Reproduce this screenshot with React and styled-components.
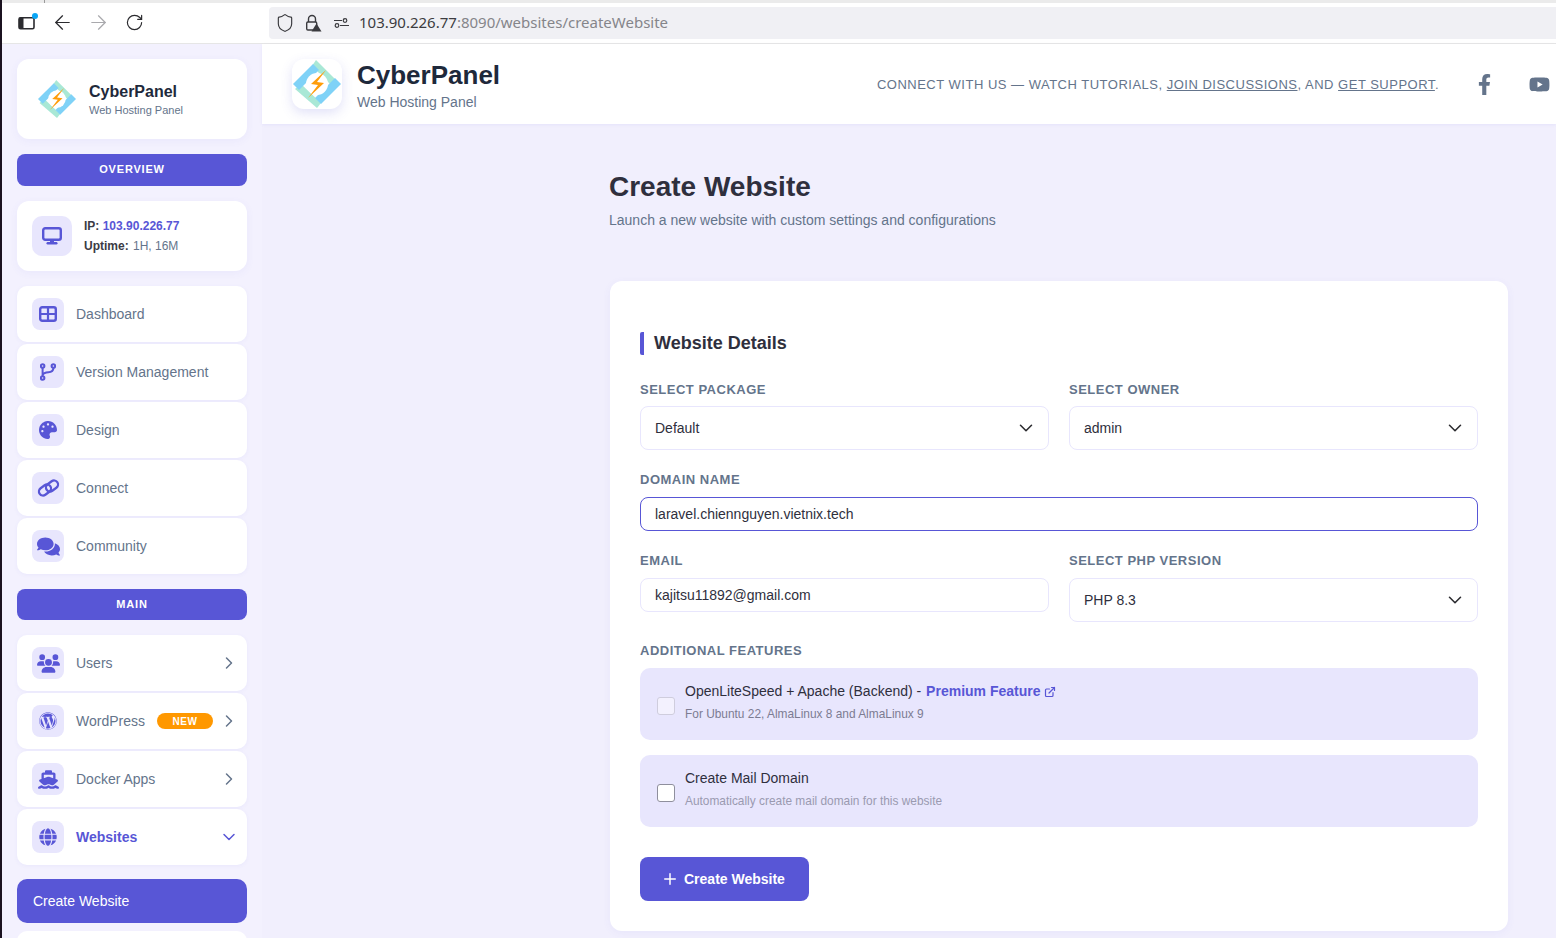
import React from "react";
import styled, { createGlobalStyle } from "styled-components";
import { ArrowLeft, ArrowRight, RotateCw, Shield, ChevronRight, ChevronDown, Plus, ExternalLink } from "lucide-react";
import { FaPalette, FaComments, FaWordpress, FaGlobe, FaFacebookF, FaYoutube } from "react-icons/fa";
import { FaShip, FaUsers } from "react-icons/fa6";

const GlobalStyle = createGlobalStyle`
  html, body {
    margin: 0;
    padding: 0;
    height: 100%;
    overflow: hidden;
    background: #f1effd;
    font-family: "Liberation Sans", Arial, sans-serif;
  }
  * { box-sizing: border-box; }
`;

const Logo = ({ size }) => (
  <svg width={size} height={size} viewBox="0 0 48 48">
    <polygon points="23,0 42,19 37,24 19,6" fill="#a9e8d6" />
    <polygon points="2,29 8,24 28,43 24,48" fill="#a9e8d6" />
    <polygon points="0,24 20,4 26,10 6,30" fill="#7fd2f7" />
    <polygon points="48,24 28,44 22,38 42,18" fill="#7fd2f7" />
    <circle cx="24" cy="24" r="11" fill="#fff" />
    <polygon points="33,10 18,24 25,25 15,38 31,23 24,22" fill="#ff9d0a" />
  </svg>
);

const DesktopIcon = () => (
  <svg width="20" height="18" viewBox="0 0 20 18">
    <rect x="1.2" y="1.2" width="17.6" height="11.6" rx="2" fill="none" stroke="currentColor" strokeWidth="2.4" />
    <path d="M8 13h4v2H8z" fill="currentColor" />
    <rect x="4.5" y="15" width="11" height="2.4" rx="1.2" fill="currentColor" />
  </svg>
);

const DashIcon = () => (
  <svg width="18" height="16" viewBox="0 0 18 16">
    <rect x="1.2" y="1.2" width="15.6" height="13.6" rx="2" fill="none" stroke="currentColor" strokeWidth="2.4" />
    <path d="M1 8h16M9 1v14" stroke="currentColor" strokeWidth="2.2" />
  </svg>
);

const BranchIcon = () => (
  <svg width="16" height="18" viewBox="0 0 16 18" fill="none" stroke="currentColor" strokeWidth="2">
    <circle cx="2.6" cy="3" r="1.8" />
    <circle cx="2.6" cy="15" r="1.8" />
    <circle cx="13.4" cy="3" r="1.8" />
    <path d="M2.6 5v8M13.4 5c0 3-2 4-5 4.2-3 .2-5 1-5.8 2.8" />
  </svg>
);

const LinkIcon = () => (
  <svg width="23" height="18" viewBox="0 0 23 18" fill="none" stroke="currentColor" strokeWidth="2.3">
    <rect x="1.5" y="7" width="13" height="8" rx="4" transform="rotate(-36 8 11)" />
    <rect x="8.5" y="3" width="13" height="8" rx="4" transform="rotate(-36 15 7)" />
  </svg>
);

const App = () => {
  return (
    <Page>
      <GlobalStyle />
      <TabStrip>
        <TabTick />
      </TabStrip>
      <Toolbar>
        <NavButtons>
          <NavCell>
            <PanelToggle>
              <svg width="18" height="14" viewBox="0 0 18 14">
                <rect x="1" y="1.7" width="15" height="11" rx="1.5" fill="none" stroke="#2b2b2f" strokeWidth="1.6" />
                <rect x="1" y="1.7" width="4.5" height="11" fill="#2b2b2f" />
              </svg>
              <PanelDot />
            </PanelToggle>
          </NavCell>
          <NavCell><ArrowLeft size={23} color="#2b2b2f" strokeWidth={1.3} /></NavCell>
          <NavCell><ArrowRight size={23} color="#a9a9ad" strokeWidth={1.3} /></NavCell>
          <NavCell><RotateCw size={19} color="#2b2b2f" strokeWidth={1.5} /></NavCell>
        </NavButtons>
        <AddressBar>
          <AddressCell><Shield size={20} color="#3a3a3e" strokeWidth={1.4} /></AddressCell>
          <AddressCell>
            <svg width="17" height="18" viewBox="0 0 17 18">
              <path d="M3.5 8V5a3.5 3.5 0 0 1 7 0v3" fill="none" stroke="#3a3a3e" strokeWidth="1.4" />
              <rect x="1.7" y="8" width="10" height="8" rx="1.2" fill="none" stroke="#3a3a3e" strokeWidth="1.4" />
              <path d="M11.5 9.5l5 8h-10z" fill="#3a3a3e" />
            </svg>
          </AddressCell>
          <AddressCell>
            <svg width="15" height="10" viewBox="0 0 15 10" fill="none" stroke="#3a3a3e" strokeWidth="1.2">
              <circle cx="11" cy="2.5" r="1.8" />
              <circle cx="3" cy="7.5" r="1.8" />
              <path d="M0 2.5h8M6 7.5h9" />
            </svg>
          </AddressCell>
          <UrlText>
            103.90.226.77<UrlMuted>:8090/websites/createWebsite</UrlMuted>
          </UrlText>
        </AddressBar>
      </Toolbar>

      <Body>
        <Sidebar>
          <BrandCard>
            <Logo size={38} />
            <BrandText>
              <BrandName>CyberPanel</BrandName>
              <BrandSub>Web Hosting Panel</BrandSub>
            </BrandText>
          </BrandCard>

          <SectionPill>OVERVIEW</SectionPill>

          <InfoCard>
            <InfoIcon>
              <DesktopIcon />
            </InfoIcon>
            <div>
              <InfoLine>
                <b>IP:</b> <IpValue>103.90.226.77</IpValue>
              </InfoLine>
              <InfoLine>
                <b>Uptime:</b> <UptimeValue>1H, 16M</UptimeValue>
              </InfoLine>
            </div>
          </InfoCard>

          <NavGroup>
            <NavItem>
              <NavIcon><DashIcon /></NavIcon>
              <NavLabel>Dashboard</NavLabel>
            </NavItem>
            <NavItem>
              <NavIcon><BranchIcon /></NavIcon>
              <NavLabel>Version Management</NavLabel>
            </NavItem>
            <NavItem>
              <NavIcon><FaPalette size={18} /></NavIcon>
              <NavLabel>Design</NavLabel>
            </NavItem>
            <NavItem>
              <NavIcon><LinkIcon /></NavIcon>
              <NavLabel>Connect</NavLabel>
            </NavItem>
            <NavItem>
              <NavIcon><FaComments size={23} /></NavIcon>
              <NavLabel>Community</NavLabel>
            </NavItem>
          </NavGroup>

          <SectionPill $short>MAIN</SectionPill>

          <NavGroup>
            <NavItem>
              <NavIcon><FaUsers size={23} /></NavIcon>
              <NavLabel>Users</NavLabel>
              <Chevron><ChevronRight size={20} strokeWidth={1.8} /></Chevron>
            </NavItem>
            <NavItem>
              <NavIcon><FaWordpress size={18} /></NavIcon>
              <NavLabel>WordPress</NavLabel>
              <NewBadge>NEW</NewBadge>
              <Chevron><ChevronRight size={20} strokeWidth={1.8} /></Chevron>
            </NavItem>
            <NavItem>
              <NavIcon><FaShip size={21} /></NavIcon>
              <NavLabel>Docker Apps</NavLabel>
              <Chevron><ChevronRight size={20} strokeWidth={1.8} /></Chevron>
            </NavItem>
            <NavItem>
              <NavIcon><FaGlobe size={18} /></NavIcon>
              <NavLabel $active>Websites</NavLabel>
              <Chevron $active><ChevronDown size={20} strokeWidth={1.8} /></Chevron>
            </NavItem>
          </NavGroup>

          <SubGroup>
            <SubItem $active>Create Website</SubItem>
            <SubItem />
          </SubGroup>
        </Sidebar>

        <Column>
          <Header>
            <HeaderBrand>
              <LogoTile>
                <Logo size={48} />
              </LogoTile>
              <HeaderText>
                <HeaderName>CyberPanel</HeaderName>
                <HeaderSub>Web Hosting Panel</HeaderSub>
              </HeaderText>
            </HeaderBrand>
            <HeaderRight>
              <ConnectText>
                Connect with us — watch tutorials, <u>join discussions</u>, and <u>get support</u>.
              </ConnectText>
              <SocialIcon><FaFacebookF size={21} /></SocialIcon>
              <SocialIcon><FaYoutube size={21} /></SocialIcon>
            </HeaderRight>
          </Header>

          <Main>
            <PageTitle>Create Website</PageTitle>
            <PageSub>Launch a new website with custom settings and configurations</PageSub>

            <Card>
              <SectionTitle>Website Details</SectionTitle>

              <TwoCols>
                <Field>
                  <Label $tight>Select Package</Label>
                  <SelectBox>
                    Default
                    <ChevronDown size={22} color="#2b2b2f" strokeWidth={1.7} />
                  </SelectBox>
                </Field>
                <Field>
                  <Label $tight>Select Owner</Label>
                  <SelectBox>
                    admin
                    <ChevronDown size={22} color="#2b2b2f" strokeWidth={1.7} />
                  </SelectBox>
                </Field>
              </TwoCols>

              <Field>
                <Label>Domain Name</Label>
                <TextInput $focused readOnly value="laravel.chiennguyen.vietnix.tech" />
              </Field>

              <TwoCols>
                <LastField>
                  <Label>Email</Label>
                  <TextInput readOnly value="kajitsu11892@gmail.com" />
                </LastField>
                <LastField>
                  <Label>Select PHP Version</Label>
                  <SelectBox>
                    PHP 8.3
                    <ChevronDown size={22} color="#2b2b2f" strokeWidth={1.7} />
                  </SelectBox>
                </LastField>
              </TwoCols>

              <Label>Additional Features</Label>
              <FeatureBox>
                <CheckBox type="checkbox" disabled />
                <FeatureText>
                  <FeatureTitle>
                    OpenLiteSpeed + Apache (Backend) - <PremiumLink>Premium Feature</PremiumLink>{" "}
                    <LinkOut size={12} strokeWidth={2.4} />
                  </FeatureTitle>
                  <FeatureHint $dark>For Ubuntu 22, AlmaLinux 8 and AlmaLinux 9</FeatureHint>
                </FeatureText>
              </FeatureBox>
              <FeatureBox>
                <CheckBox type="checkbox" />
                <FeatureText>
                  <FeatureTitle>Create Mail Domain</FeatureTitle>
                  <FeatureHint>Automatically create mail domain for this website</FeatureHint>
                </FeatureText>
              </FeatureBox>

              <PrimaryButton>
                <Plus size={18} strokeWidth={2} />
                Create Website
              </PrimaryButton>
            </Card>
          </Main>
        </Column>
      </Body>
    </Page>
  );
};

export default App;

const Page = styled.div`
  height: 938px;
  overflow: hidden;
  border-left: 2px solid #1b1220;
  display: flex;
  flex-direction: column;
`;
const TabStrip = styled.div`
  height: 3px;
  background: #ebebeb;
  flex: none;
`;
const TabTick = styled.div`
  width: 1px;
  height: 3px;
  margin-left: 42px;
  background: #9a9a9a;
`;
const Toolbar = styled.div`
  height: 41px;
  flex: none;
  background: #fff;
  border-bottom: 1px solid #e6e6e6;
  display: flex;
  align-items: center;
  padding-bottom: 1px;
`;
const NavButtons = styled.div`
  width: 267px;
  flex: none;
  padding-left: 6px;
  display: flex;
  align-items: center;
`;
const NavCell = styled.div`
  width: 36px;
  height: 24px;
  display: flex;
  align-items: center;
  justify-content: center;
`;
const PanelToggle = styled.div`
  position: relative;
  width: 18px;
  height: 14px;
  margin-left: 1px;
  display: flex;
`;
const PanelDot = styled.span`
  position: absolute;
  top: -3px;
  right: -2px;
  width: 6px;
  height: 6px;
  border-radius: 50%;
  background: #0aa5f5;
`;
const AddressBar = styled.div`
  flex: 1;
  height: 32px;
  background: #f0f0f4;
  border-radius: 4px 0 0 4px;
  display: flex;
  align-items: center;
  padding-left: 2px;
`;
const AddressCell = styled.div`
  width: 28px;
  display: flex;
  align-items: center;
  justify-content: center;
`;
const UrlText = styled.div`
  font-family: "Noto Sans", sans-serif;
  font-size: 15px;
  color: #3c3c40;
  margin-left: 4px;
  padding-bottom: 2px;
`;
const UrlMuted = styled.span`
  color: #85858a;
`;
const Body = styled.div`
  flex: 1;
  min-height: 0;
  display: flex;
`;
const Sidebar = styled.aside`
  width: 260px;
  flex: none;
  padding: 15px;
  background: #f3f1fe;
  display: flex;
  flex-direction: column;
  gap: 15px;
`;
const BrandCard = styled.div`
  height: 80px;
  flex: none;
  background: #fff;
  border-radius: 12px;
  box-shadow: 0 2px 8px rgba(88, 86, 214, 0.06);
  display: flex;
  align-items: center;
  gap: 13px;
  padding-left: 21px;
`;
const BrandText = styled.div`
  padding-top: 2px;
`;
const BrandName = styled.div`
  font-size: 16px;
  font-weight: 700;
  color: #1e293b;
  line-height: 20px;
`;
const BrandSub = styled.div`
  font-size: 11px;
  color: #64748b;
  line-height: 15px;
  margin-top: 1px;
`;
const SectionPill = styled.div`
  height: ${(p) => (p.$short ? "31px" : "32px")};
  flex: none;
  background: #5856d6;
  border-radius: 8px;
  color: #fff;
  font-size: 11px;
  font-weight: 700;
  letter-spacing: 0.8px;
  padding-bottom: 2px;
  display: flex;
  align-items: center;
  justify-content: center;
`;
const InfoCard = styled.div`
  height: 70px;
  flex: none;
  background: #fff;
  border-radius: 12px;
  box-shadow: 0 2px 8px rgba(88, 86, 214, 0.06);
  display: flex;
  align-items: center;
  gap: 12px;
  padding-left: 15px;
`;
const InfoIcon = styled.div`
  width: 40px;
  height: 40px;
  border-radius: 10px;
  background: #e8e6fd;
  color: #5856d6;
  display: flex;
  align-items: center;
  justify-content: center;
`;
const InfoLine = styled.div`
  font-size: 12px;
  line-height: 20px;
  color: #64748b;
  b {
    color: #3b3b45;
  }
`;
const IpValue = styled.span`
  color: #5856d6;
  font-weight: 700;
`;
const UptimeValue = styled.span`
  margin-left: 1px;
`;
const NavGroup = styled.nav`
  flex: none;
  display: flex;
  flex-direction: column;
  gap: 2px;
`;
const NavItem = styled.div`
  height: 56px;
  background: #fff;
  border-radius: 10px;
  box-shadow: 0 1px 4px rgba(88, 86, 214, 0.06);
  display: flex;
  align-items: center;
  padding: 0 8px 0 15px;
`;
const NavIcon = styled.div`
  width: 32px;
  height: 32px;
  flex: none;
  border-radius: 8px;
  background: #e8e6fd;
  color: #5856d6;
  display: flex;
  align-items: center;
  justify-content: center;
  margin-right: 12px;
`;
const NavLabel = styled.span`
  font-size: 14px;
  color: ${(p) => (p.$active ? "#5856d6" : "#64748b")};
  font-weight: ${(p) => (p.$active ? 700 : 400)};
`;
const NewBadge = styled.span`
  width: 56px;
  height: 16px;
  margin-left: 12px;
  border-radius: 8px;
  background: #ff9800;
  color: #fff;
  font-size: 10px;
  font-weight: 700;
  letter-spacing: 0.5px;
  display: flex;
  align-items: center;
  justify-content: center;
`;
const Chevron = styled.span`
  margin-left: auto;
  display: flex;
  color: ${(p) => (p.$active ? "#5856d6" : "#64748b")};
`;
const SubGroup = styled.div`
  flex: none;
  display: flex;
  flex-direction: column;
  gap: 8px;
  margin-top: -1px;
`;
const SubItem = styled.div`
  height: 44px;
  flex: none;
  border-radius: 10px;
  padding-left: 16px;
  display: flex;
  align-items: center;
  font-size: 14px;
  background: ${(p) => (p.$active ? "#5856d6" : "#fff")};
  color: ${(p) => (p.$active ? "#fff" : "#64748b")};
`;
const Column = styled.div`
  flex: 1;
  min-width: 0;
  display: flex;
  flex-direction: column;
`;
const Header = styled.header`
  height: 80px;
  flex: none;
  background: #fff;
  box-shadow: 0 1px 3px rgba(88, 86, 214, 0.08);
  display: flex;
  align-items: center;
  justify-content: space-between;
  padding-left: 30px;
`;
const HeaderBrand = styled.div`
  display: flex;
  align-items: center;
  gap: 15px;
`;
const LogoTile = styled.div`
  width: 50px;
  height: 50px;
  border-radius: 12px;
  background: #fff;
  box-shadow: 0 4px 12px rgba(88, 86, 214, 0.18);
  display: flex;
  align-items: center;
  justify-content: center;
`;
const HeaderText = styled.div`
  padding-top: 3px;
`;
const HeaderName = styled.div`
  font-size: 26px;
  font-weight: 700;
  color: #1e293b;
  line-height: 30px;
`;
const HeaderSub = styled.div`
  font-size: 14px;
  color: #64748b;
  line-height: 18px;
  margin-top: 3px;
`;
const HeaderRight = styled.div`
  display: flex;
  align-items: center;
  margin-right: -11px;
`;
const ConnectText = styled.div`
  font-size: 13px;
  color: #64748b;
  text-transform: uppercase;
  letter-spacing: 0.5px;
`;
const SocialIcon = styled.span`
  width: 55px;
  display: flex;
  justify-content: center;
  color: #64748b;
  &:first-of-type {
    margin-left: 18px;
  }
`;
const Main = styled.main`
  flex: 1;
  min-height: 0;
  padding: 46px 48px 0 347px;
`;
const PageTitle = styled.h1`
  margin: 0;
  font-size: 28px;
  line-height: 34px;
  font-weight: 700;
  color: #2f2f3d;
`;
const PageSub = styled.p`
  margin: 6px 0 0;
  font-size: 14px;
  line-height: 20px;
  color: #64748b;
`;
const Card = styled.section`
  margin: 51px 0 0 1px;
  background: #fff;
  border-radius: 12px;
  padding: 51px 30px 30px;
  box-shadow: 0 2px 8px rgba(88, 86, 214, 0.06);
`;
const SectionTitle = styled.h2`
  margin: 0 0 27px;
  height: 23px;
  border-left: 4px solid #5856d6;
  border-radius: 2px;
  padding-left: 10px;
  font-size: 18px;
  line-height: 23px;
  font-weight: 700;
  color: #2f2f3d;
`;
const TwoCols = styled.div`
  display: grid;
  grid-template-columns: 1fr 1fr;
  gap: 20px;
`;
const Field = styled.div`
  margin-bottom: 22px;
`;
const LastField = styled.div`
  margin-bottom: 21px;
`;
const Label = styled.div`
  font-size: 13px;
  line-height: 16px;
  font-weight: 700;
  letter-spacing: 0.5px;
  color: #64748b;
  text-transform: uppercase;
  margin-bottom: ${(p) => (p.$tight ? "8px" : "9px")};
`;
const SelectBox = styled.div`
  height: 44px;
  border: 1px solid #e8e6fd;
  border-radius: 8px;
  background: #fff;
  padding: 0 11px 0 14px;
  display: flex;
  align-items: center;
  justify-content: space-between;
  font-size: 14px;
  color: #2f2f3d;
`;
const TextInput = styled.input`
  display: block;
  width: 100%;
  height: 34px;
  border: 1px solid ${(p) => (p.$focused ? "#5856d6" : "#e8e6fd")};
  border-radius: 8px;
  background: #fff;
  padding: 0 14px;
  font-family: inherit;
  font-size: 14px;
  color: #2f2f3d;
  outline: none;
`;
const FeatureBox = styled.div`
  height: 72px;
  margin-bottom: 15px;
  border-radius: 10px;
  background: #e8e6fd;
  display: flex;
  align-items: flex-start;
  gap: 10px;
  padding-left: 17px;
`;
const CheckBox = styled.input`
  appearance: none;
  width: 18px;
  height: 18px;
  margin: 29px 0 0;
  flex: none;
  border-radius: 3px;
  background: #fff;
  border: 1px solid #8f8f9d;
  &:disabled {
    background: #f3f1fe;
    border-color: #cfcddd;
  }
`;
const FeatureText = styled.div`
  padding-top: 14px;
`;
const FeatureTitle = styled.div`
  font-size: 14px;
  line-height: 18px;
  color: #2f2f3d;
`;
const PremiumLink = styled.span`
  color: #5856d6;
  font-weight: 700;
  margin-left: 1px;
`;
const LinkOut = styled(ExternalLink)`
  color: #5856d6;
  vertical-align: -2px;
`;
const FeatureHint = styled.div`
  font-size: 11.9px;
  line-height: 16px;
  margin-top: 6px;
  color: ${(p) => (p.$dark ? "#7c7c92" : "#9a9ab0")};
`;
const PrimaryButton = styled.button`
  margin-top: 30px;
  width: 169px;
  height: 44px;
  border: none;
  border-radius: 8px;
  background: #5856d6;
  color: #fff;
  font-family: inherit;
  font-size: 14px;
  font-weight: 700;
  display: flex;
  align-items: center;
  gap: 5px;
  padding: 0 0 0 21px;
`;
